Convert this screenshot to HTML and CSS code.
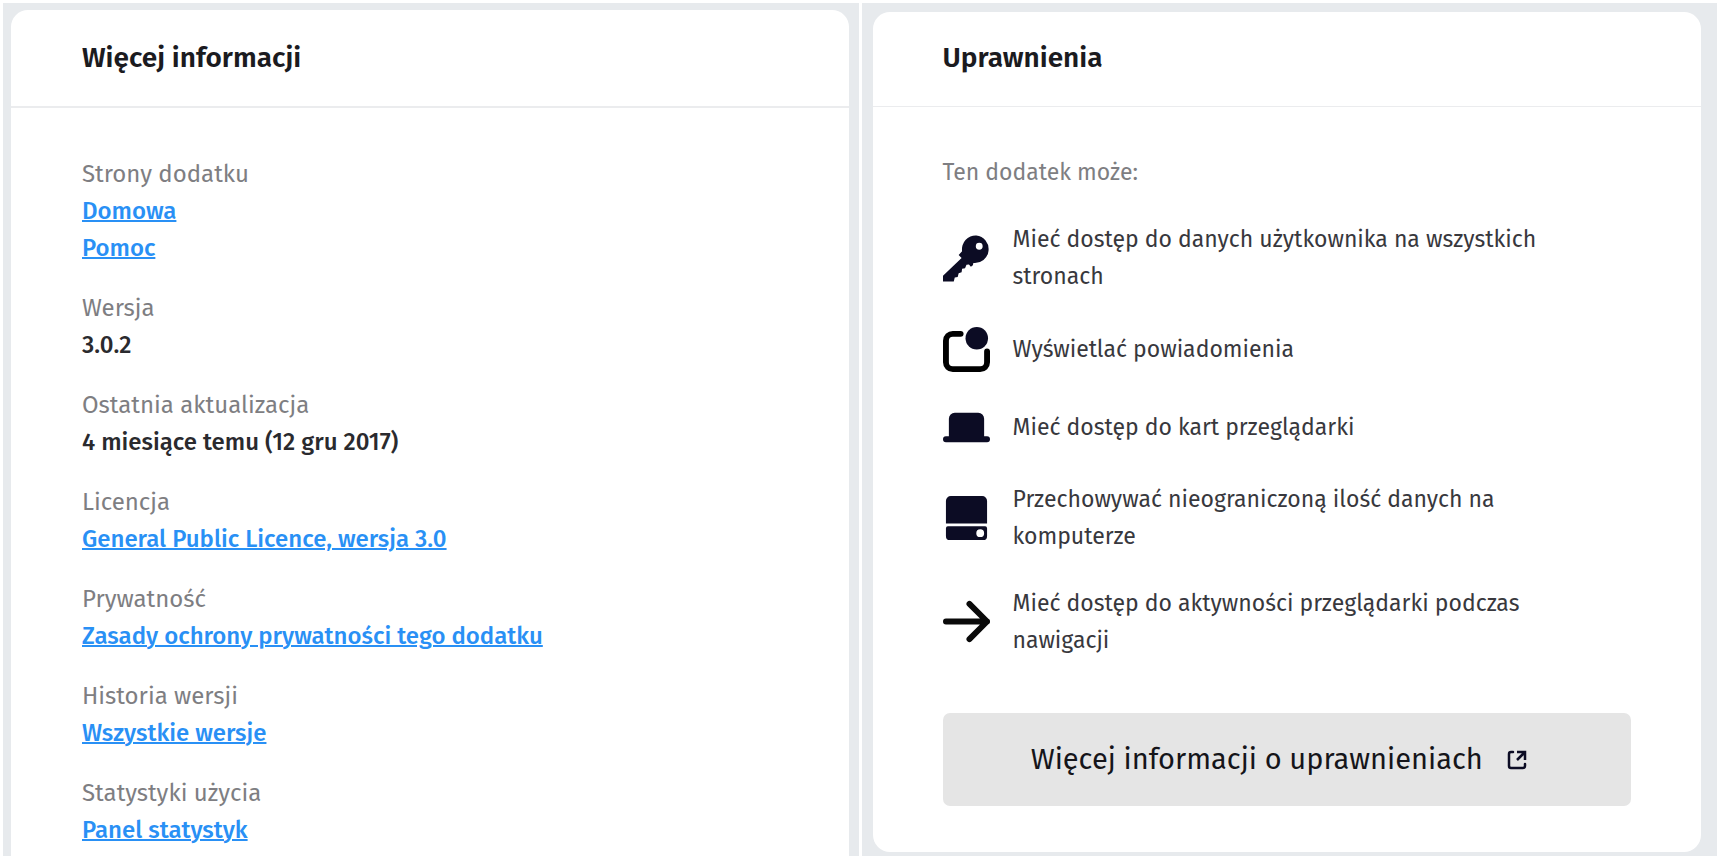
FILE: index.html
```html
<!DOCTYPE html>
<html lang="pl">
  <head>
    <meta charset="UTF-8" />
    <meta name="viewport" content="width=device-width, initial-scale=1.0" />
    <title>Więcej informacji</title>
    <link rel="stylesheet" href="styles.css">
  </head>

  <body>
    <main class="panes">
      <div class="pane pane-info">
        <section class="card">
          <h2>Więcej informacji</h2>
          <dl class="info-list">
            <div>
              <dt>Strony dodatku</dt>
              <dd><a href="#">Domowa</a></dd>
              <dd><a href="#">Pomoc</a></dd>
            </div>
            <div>
              <dt>Wersja</dt>
              <dd>3.0.2</dd>
            </div>
            <div>
              <dt>Ostatnia aktualizacja</dt>
              <dd>4 miesiące temu (12 gru 2017)</dd>
            </div>
            <div>
              <dt>Licencja</dt>
              <dd><a href="#">General Public Licence, wersja 3.0</a></dd>
            </div>
            <div>
              <dt>Prywatność</dt>
              <dd><a href="#">Zasady ochrony prywatności tego dodatku</a></dd>
            </div>
            <div>
              <dt>Historia wersji</dt>
              <dd><a href="#">Wszystkie wersje</a></dd>
            </div>
            <div>
              <dt>Statystyki użycia</dt>
              <dd><a href="#">Panel statystyk</a></dd>
            </div>
          </dl>
        </section>
      </div>

      <div class="pane pane-permissions">
        <section class="card">
          <h2>Uprawnienia</h2>
          <div class="permissions">
            <p class="intro">Ten dodatek może:</p>
            <ul class="permission-list">
              <li>
                <svg class="icon" viewBox="0 0 48 48" aria-hidden="true">
                  <path fill="#0c0c24" fill-rule="evenodd" d="M34 0.500a14 14 0 1 1-3 28l-.5 2.500-2 1.500-2-2.500-2.500.5-1.500 3.500-3 .5-.5 3.500-3 1-1 4-3 .5-1 4H0v-6l19-18-3-3 3.500-4A14 14 0 0 1 34 .5zM37 8a3.500 3.500 0 1 0 0 7 3.500 3.500 0 0 0 0-7z" />
                </svg>
                <span>Mieć dostęp do danych użytkownika na wszystkich stronach</span>
              </li>
              <li>
                <svg class="icon" viewBox="0 0 48 48" aria-hidden="true">
                  <path fill="none" stroke="#000" stroke-width="6" stroke-linecap="round" d="M18 8h-8a7 7 0 0 0-7 7v22a7 7 0 0 0 7 7h28a7 7 0 0 0 7-7V26" />
                  <circle cx="34.500" cy="12.500" r="11.500" fill="#0c0c24" />
                </svg>
                <span>Wyświetlać powiadomienia</span>
              </li>
              <li>
                <svg class="icon" viewBox="0 0 48 48" aria-hidden="true">
                  <path fill="#0c0c24" d="M12 9h24a6 6 0 0 1 6 6v18h3a3 3 0 0 1 0 6H3a3 3 0 0 1 0-6h3V15a6 6 0 0 1 6-6z" />
                </svg>
                <span>Mieć dostęp do kart przeglądarki</span>
              </li>
              <li>
                <svg class="icon" viewBox="0 0 48 48" aria-hidden="true">
                  <path fill="#0c0c24" fill-rule="evenodd" d="M8 1h32a5 5 0 0 1 5 5v23H3V6a5 5 0 0 1 5-5zM5 32h38a2 2 0 0 1 2 2v8a4 4 0 0 1-4 4H7a4 4 0 0 1-4-4v-8a2 2 0 0 1 2-2zM38 35a4 4 0 1 0 0 8 4 4 0 0 0 0-8z" />
                </svg>
                <span>Przechowywać nieograniczoną ilość danych na komputerze</span>
              </li>
              <li>
                <svg class="icon" viewBox="0 0 48 48" aria-hidden="true">
                  <path fill="none" stroke="#0a0a0a" stroke-width="6" stroke-linecap="round" stroke-linejoin="round" d="M3 23h42M27 5l18 18-18 18" />
                </svg>
                <span>Mieć dostęp do aktywności przeglądarki podczas nawigacji</span>
              </li>
            </ul>
            <a class="more-btn" href="#">
              Więcej informacji o uprawnieniach
              <svg class="icon-external" viewBox="0 0 20 20" aria-hidden="true">
                <path fill="none" stroke="#0c0c24" stroke-width="2.500" stroke-linecap="round" stroke-linejoin="round" d="M6 2H4a2 2 0 0 0-2 2v12a2 2 0 0 0 2 2h12a2 2 0 0 0 2-2v-2" />
                <path fill="none" stroke="#0c0c24" stroke-width="2.500" d="M10 2h8v8M18 2l-8 8" />
              </svg>
            </a>
          </div>
        </section>
      </div>
    </main>
  </body>
</html>
```

FILE: styles.css
```css
* {
  box-sizing: border-box;
}

body {
  font-family: "Fira Sans", "Roboto", sans-serif;
  font-size: 24px;
  line-height: 37px;
  color: #38383d;
  background-color: #ffffff;
  margin: 0;
}

.panes {
  display: grid;
  grid-template-columns: 1fr 1fr;
  gap: 3px;
  height: 100vh;
  padding: 3px;
}

.pane {
  background-color: #e7eaed;
  overflow: hidden;
}

.pane-info {
  padding: 7px 10px 0 8px;
}

.pane-permissions {
  padding: 9px 16px 4px 11px;
}

.card {
  background-color: #ffffff;
  border-radius: 17px;
}

h2 {
  margin: 0;
  padding: 29px 71px;
  border-bottom: 2px solid #ebecee;
  font-size: 28px;
  font-weight: 600;
  line-height: 38px;
  color: #1b1b1f;
}

.pane-permissions h2 {
  padding: 27px 70px 29px;
  border-bottom-width: 1px;
}

.info-list {
  margin: 0;
  padding: 48px 71px;
}

.info-list div {
  margin-bottom: 23px;
}

dt,
.intro {
  color: #7e7e82;
}

dd {
  margin: 0;
  color: #2a2a2e;
  font-weight: 500;
}

dd a {
  color: #2990f5;
  text-decoration: underline;
  text-decoration-thickness: 2px;
  text-underline-offset: 1px;
}

.permissions {
  padding: 47px 70px 46px;
  font-size: 23px;
}

.intro {
  margin: 0 0 30px;
}

.permission-list {
  display: flex;
  flex-direction: column;
  gap: 30px;
  margin: 0 0 54px;
  padding: 0 60px 0 0;
  list-style: none;
}

.permission-list li {
  display: flex;
  align-items: center;
  gap: 23px;
  min-height: 48px;
}

.icon {
  flex: none;
  width: 47px;
  height: 47px;
}

.more-btn {
  display: flex;
  align-items: center;
  justify-content: center;
  gap: 24px;
  height: 93px;
  padding-right: 16px;
  background-color: #e5e5e5;
  border-radius: 7px;
  color: #15151a;
  font-size: 29px;
  text-decoration: none;
}

.more-btn:hover {
  background-color: #d8d8d8;
}

.icon-external {
  width: 20px;
  height: 20px;
}
```
